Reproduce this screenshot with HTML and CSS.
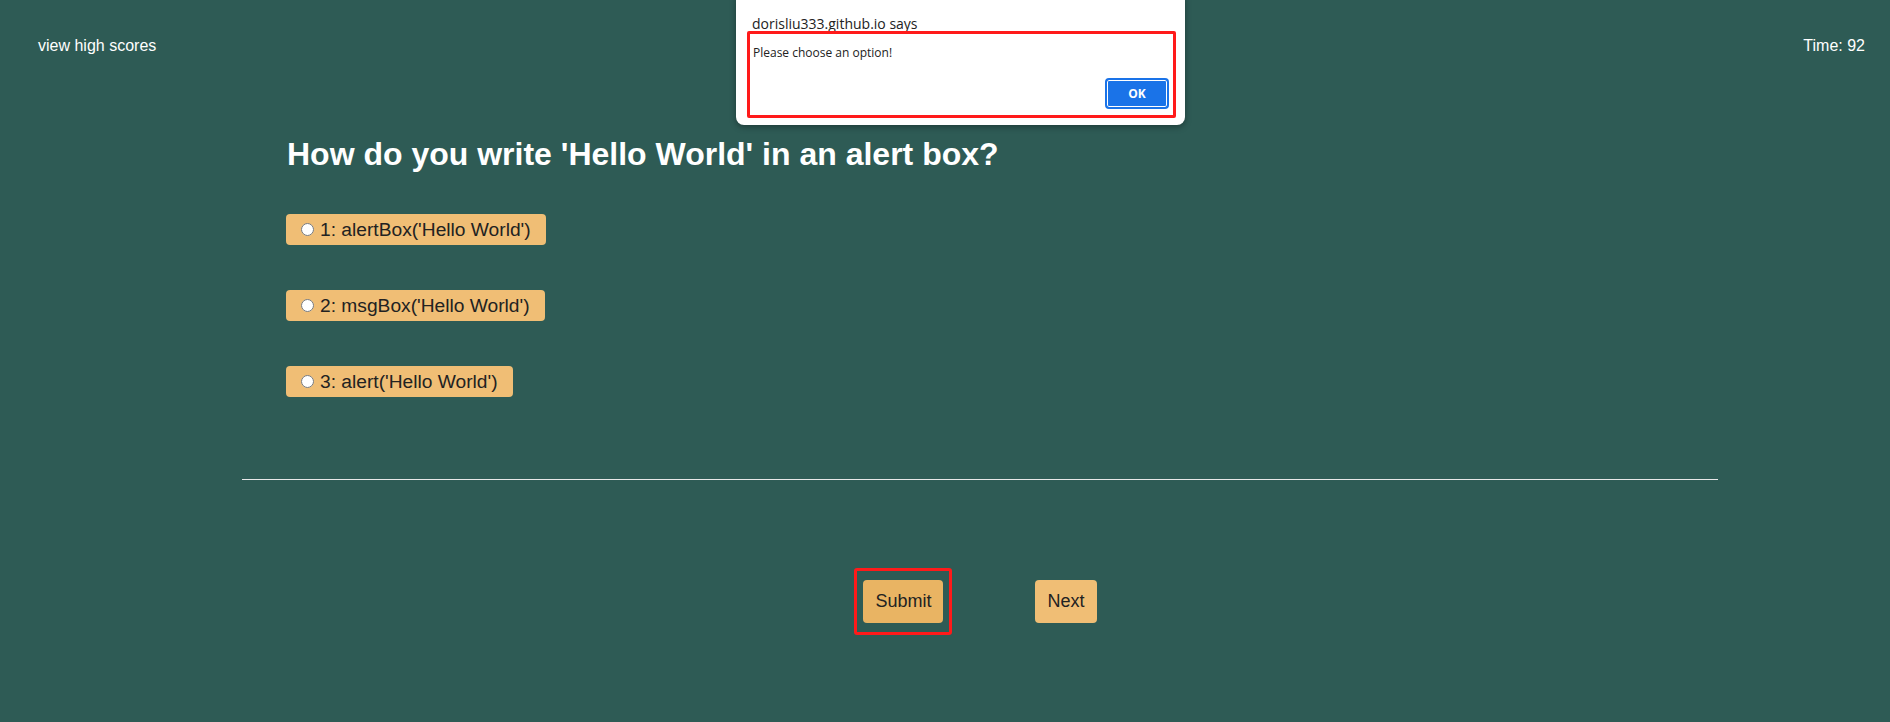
FILE: index.html
```html
<!DOCTYPE html>
<html>
<head>
<meta charset="utf-8">
<link rel="stylesheet" href="styles.css">
</head>
<body>
<header class="topbar">
  <a class="scores-link">view high scores</a>
  <span class="timer">Time: 92</span>
</header>

<main class="quiz">
  <h1 class="question">How do you write 'Hello World' in an alert box?</h1>
  <div class="options">
    <label class="option"><input type="radio" name="q"><span>1: alertBox('Hello World')</span></label>
    <label class="option"><input type="radio" name="q"><span>2: msgBox('Hello World')</span></label>
    <label class="option"><input type="radio" name="q"><span>3: alert('Hello World')</span></label>
  </div>
  <hr class="divider">
  <div class="actions">
    <div class="highlight"><button class="btn btn-submit">Submit</button></div>
    <button class="btn">Next</button>
  </div>
</main>

<div class="dialog">
  <div class="dialog-title">dorisliu333.github.io says</div>
  <div class="dialog-body">
    <div class="dialog-msg">Please choose an option!</div>
    <div class="dialog-foot"><button class="ok">OK</button></div>
  </div>
</div>
</body>
</html>
```

FILE: styles.css
```css
* { box-sizing: border-box; }
html, body { margin: 0; padding: 0; }
body {
  background: #2e5b55;
  font-family: "Liberation Sans", Arial, sans-serif;
  color: #fff;
  width: 1890px;
  height: 722px;
  overflow: hidden;
  position: relative;
}
.topbar {
  display: flex;
  justify-content: space-between;
  padding: 37px 25px 0 38px;
  font-size: 16px;
  line-height: 18px;
}
.scores-link { color: #fff; }
.timer { color: #fff; }

.quiz {
  margin-left: 242px;
  width: 1476px;
}
.question {
  font-size: 32px;
  font-weight: bold;
  margin: 0;
  padding: 0 0 0 45px;
  margin-top: 81px;
  line-height: 36px;
}
.options {
  display: flex;
  flex-direction: column;
  align-items: flex-start;
  gap: 45px;
  padding-left: 44px;
  margin-top: 42px;
}
.option {
  display: flex;
  align-items: center;
  background: #f0be75;
  color: #222;
  border-radius: 4px;
  height: 31px;
  padding: 0 15px 0 10px;
  font-size: 19.2px;
}
.option input {
  margin: 0 6px 0 5px;
  width: 13px;
  height: 13px;
}
.divider {
  border: 0;
  border-top: 1px solid #e8e8e8;
  margin: 82px 0 0 0;
  height: 0;
}
.actions {
  display: flex;
  justify-content: center;
  align-items: center;
  gap: 83px;
  margin-top: 88px;
  padding-right: 9px;
}
.highlight {
  border: 3px solid #ff1a1a;
  border-radius: 3px;
  padding: 9px 6px;
}
.btn {
  font-family: "Liberation Sans", Arial, sans-serif;
  font-size: 18px;
  color: #222;
  background: #f0be75;
  border: 0;
  border-radius: 4px;
  height: 43px;
  padding: 0 12px;
}
.btn-submit { background: #e9b463; width: 80px; }

.dialog {
  position: absolute;
  left: 736px;
  top: -8px;
  width: 449px;
  height: 133px;
  background: #fff;
  border-radius: 8px;
  box-shadow: 0 2px 6px rgba(0,0,0,0.35);
  font-family: "Open Sans", "Noto Sans", sans-serif;
  color: #222;
}
.dialog-title {
  font-size: 14px;
  position: absolute;
  left: 16px;
  top: 23px;
  line-height: 18px;
}
.dialog-body {
  position: absolute;
  left: 11px;
  top: 39px;
  width: 429px;
  height: 87px;
  border: 3px solid #ff1a1a;
  border-radius: 2px;
  padding: 11px 0 0 3px;
}
.dialog-msg { font-size: 12px; line-height: 16px; }
.dialog-foot {
  display: flex;
  justify-content: flex-end;
  margin-top: 17px;
  padding-right: 4px;
}
.ok {
  width: 64px;
  height: 31px;
  background: #1a73e8;
  color: #fff;
  font-family: "Open Sans", "Noto Sans", sans-serif;
  font-weight: bold;
  font-size: 12px;
  border: 2px solid #1a73e8;
  border-radius: 4px;
  box-shadow: inset 0 0 0 1px #fff;
}
```
